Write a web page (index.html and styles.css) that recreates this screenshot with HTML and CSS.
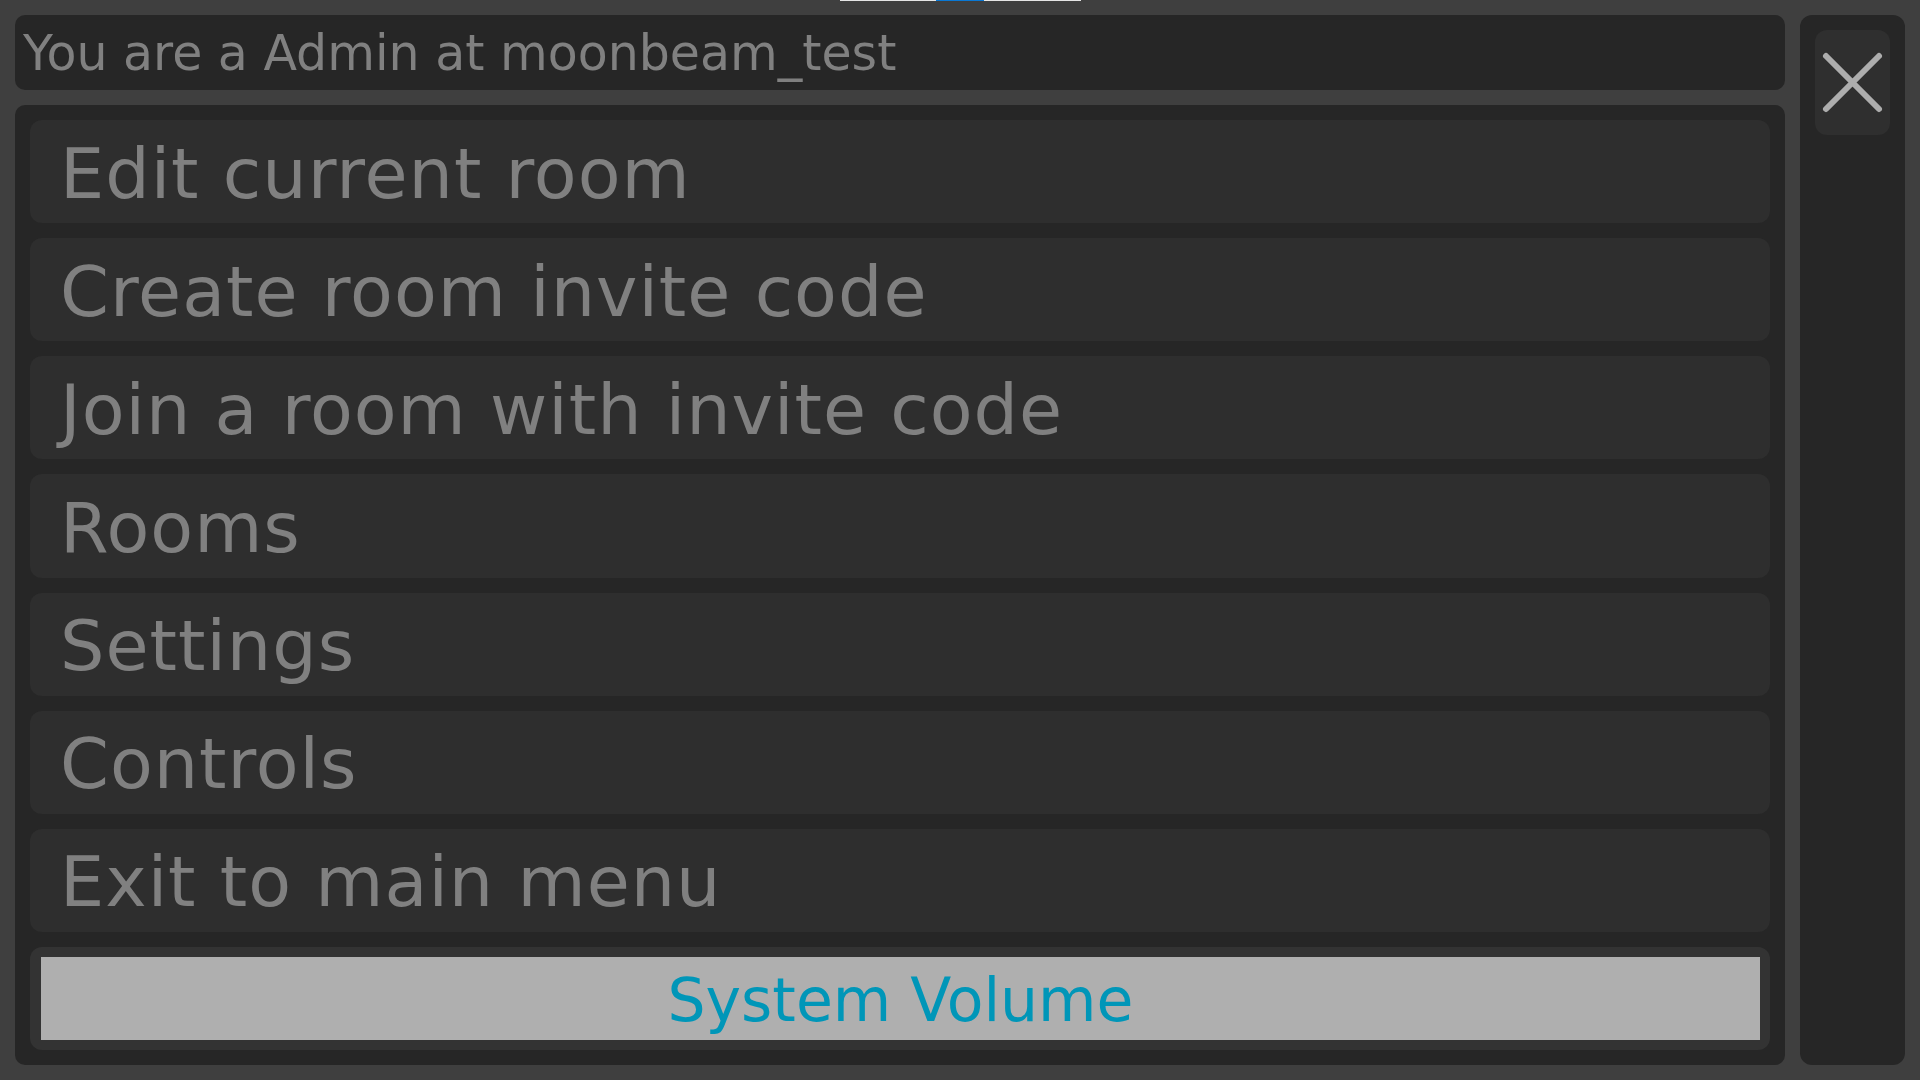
FILE: index.html
```html
<!DOCTYPE html>
<html lang="en">
<head>
<meta charset="utf-8">
<title>Menu</title>
<link rel="stylesheet" href="styles.css">
</head>
<body>
<div class="topline"><span class="topline-active"></span></div>
<div class="screen">
  <div class="left">
    <div class="header">You are a Admin at moonbeam_test</div>
    <div class="menu">
      <div class="item">Edit current room</div>
      <div class="item">Create room invite code</div>
      <div class="item">Join a room with invite code</div>
      <div class="item">Rooms</div>
      <div class="item">Settings</div>
      <div class="item">Controls</div>
      <div class="item">Exit to main menu</div>
      <div class="volume">
        <div class="volume-bar">System Volume</div>
      </div>
    </div>
  </div>
  <div class="side">
    <div class="close">
      <svg width="75" height="105" viewBox="0 0 75 105">
        <path d="M11 26 L64 79 M64 26 L11 79" stroke="#adadad" stroke-width="6" stroke-linecap="round" fill="none"/>
      </svg>
    </div>
  </div>
</div>
</body>
</html>
```

FILE: styles.css
```css
*, *::before, *::after {
  box-sizing: border-box;
}

html, body {
  margin: 0;
  padding: 0;
  width: 1920px;
  height: 1080px;
  overflow: hidden;
  background: #3f3f3f;
  font-family: "DejaVu Sans", sans-serif;
}

.topline {
  position: absolute;
  left: 840px;
  top: 0;
  width: 241px;
  height: 1px;
  background: #e6e6e6;
}

.topline-active {
  position: absolute;
  left: 96px;
  top: 0;
  width: 48px;
  height: 1px;
  background: #0a78d4;
}

.screen {
  display: grid;
  grid-template-columns: 1fr 105px;
  gap: 15px;
  padding: 15px;
  height: 1080px;
}

.left {
  display: grid;
  grid-template-rows: 75px 1fr;
  gap: 15px;
  min-height: 0;
}

.header {
  background: #262626;
  border-radius: 10px;
  color: #808080;
  font-size: 49px;
  line-height: 1;
  display: flex;
  align-items: center;
  padding-left: 8px;
  padding-top: 2px;
  white-space: nowrap;
}

.menu {
  background: #262626;
  border-radius: 10px;
  padding: 15px;
  display: grid;
  grid-template-rows: repeat(8, 1fr);
  gap: 15px;
  min-height: 0;
}

.item {
  background: #2e2e2e;
  border-radius: 12px;
  color: #808080;
  font-size: 70px;
  line-height: 1;
  display: flex;
  align-items: center;
  padding-left: 30px;
  padding-top: 4px;
  white-space: nowrap;
  letter-spacing: 1px;
}

.volume {
  background: #333333;
  border-radius: 12px;
  padding: 10px 10px 10px 11px;
  display: flex;
}

.volume-bar {
  flex: 1;
  background: #afafaf;
  color: #0096b8;
  font-size: 60px;
  line-height: 1;
  display: flex;
  align-items: center;
  justify-content: center;
  padding-top: 4px;
}

.side {
  background: #262626;
  border-radius: 12px;
  padding: 15px;
}

.close {
  width: 75px;
  height: 105px;
  background: #2f2f2f;
  border-radius: 12px;
}

.close svg {
  display: block;
}
```
